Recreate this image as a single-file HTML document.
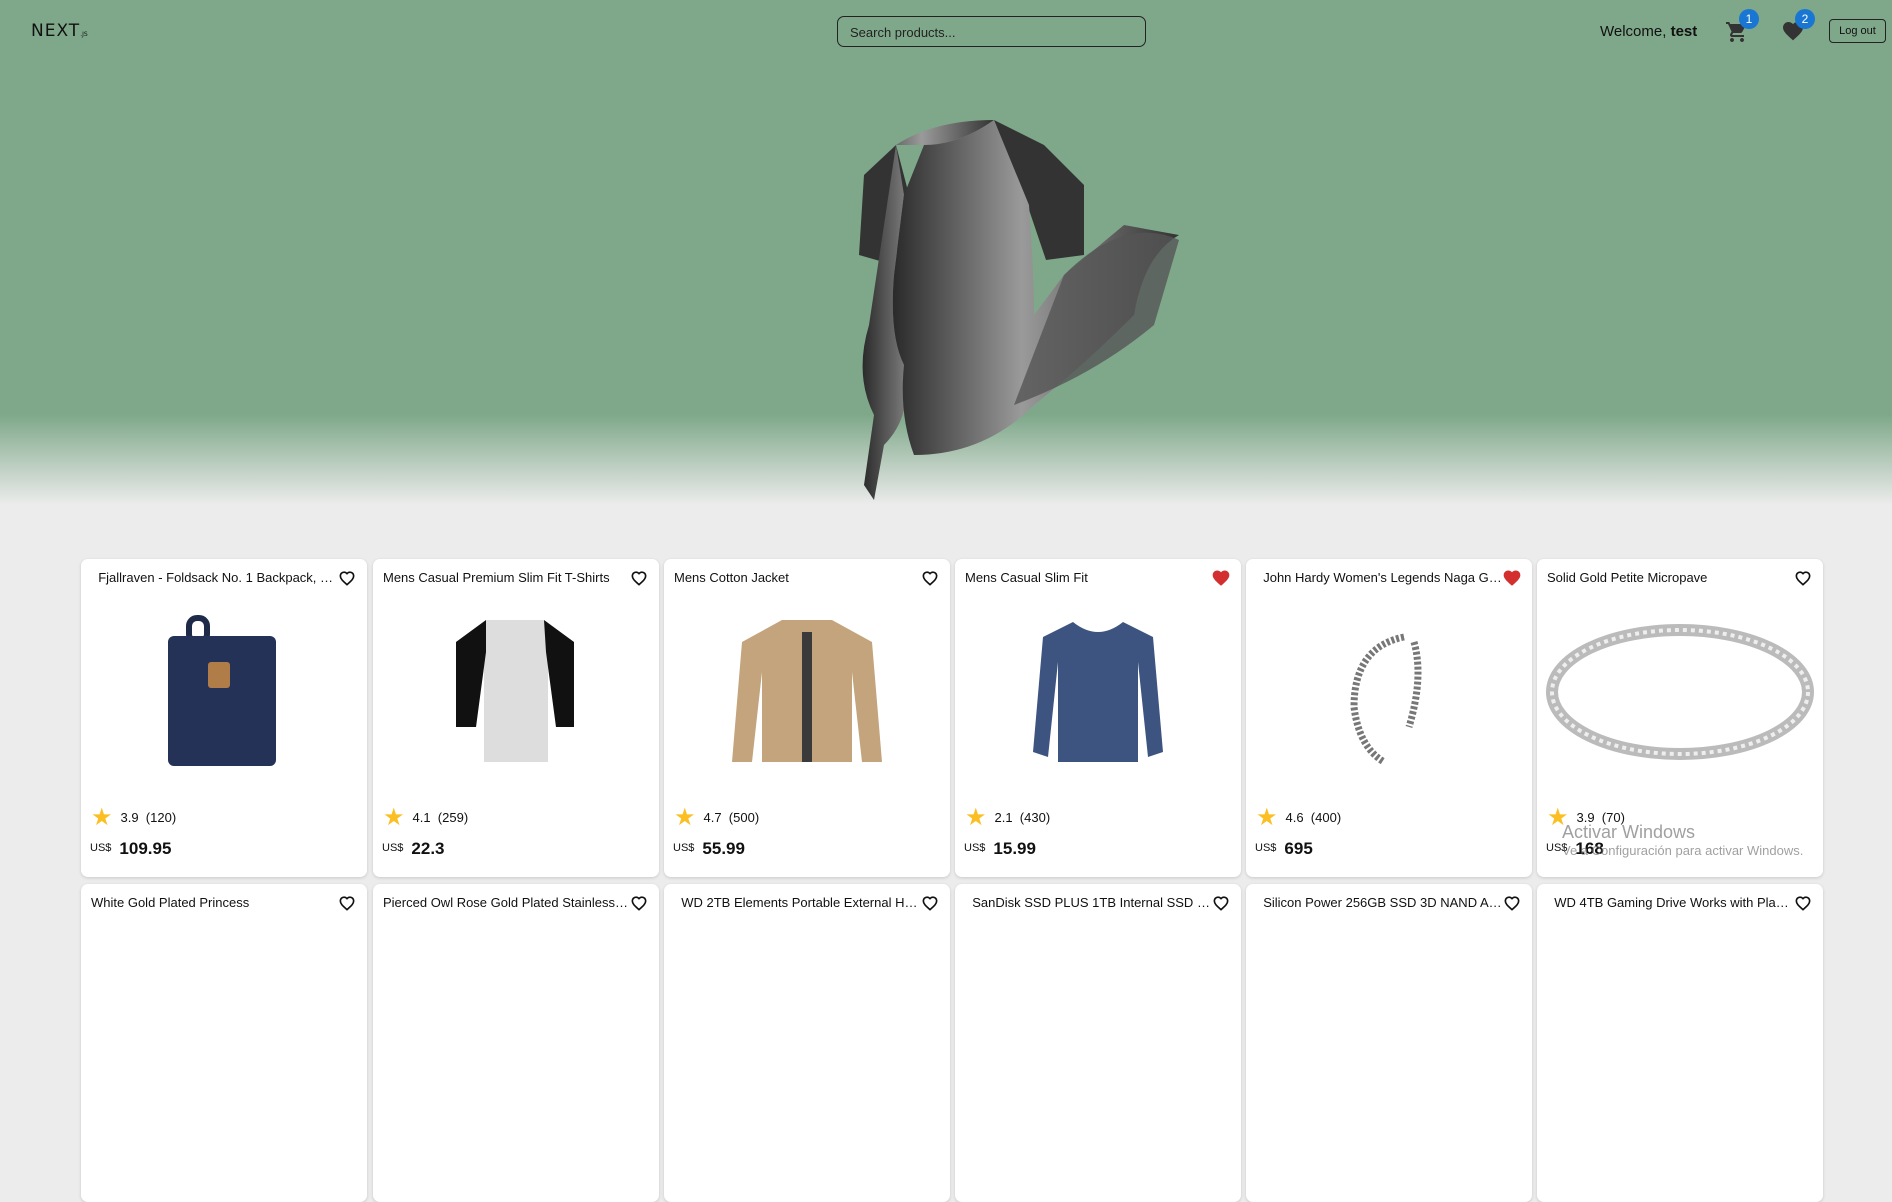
<!DOCTYPE html>
<html><head><meta charset="utf-8"><style>
*{box-sizing:border-box;margin:0;padding:0}
body{width:1892px;height:915px;overflow:hidden;background:#ececec;font-family:"Liberation Sans",sans-serif;color:#111;position:relative}
.hero{position:absolute;left:0;top:0;width:1892px;height:510px;background:linear-gradient(#7fa88a 0,#7fa88a 415px,#ececec 505px)}
.logo{position:absolute;left:31px;top:21px;font-size:17px;font-weight:normal;letter-spacing:1px;font-family:"DejaVu Sans",sans-serif}
.logo small{font-size:6px;letter-spacing:0}
.search{position:absolute;left:837px;top:16px;width:309px;height:31px;border:1.3px solid #222;border-radius:7px;font-size:13px;padding:8px 12px;color:#222}
.welcome{position:absolute;left:1600px;top:23px;font-size:15px}
.badge{position:absolute;width:20px;height:20px;border-radius:50%;background:#1976d2;color:#fff;font-size:12px;text-align:center;line-height:20px}
.logout{position:absolute;left:1829px;top:19px;width:57px;height:24px;border:1.3px solid #222;border-radius:4px;font-size:11px;text-align:center;line-height:22px}
.card{position:absolute;width:286px;height:318px;background:#fff;border-radius:7px;box-shadow:0 1px 3px rgba(0,0,0,.15)}
.t{position:absolute;left:10px;top:11px;width:248px;font-size:13px;white-space:nowrap;overflow:hidden;text-overflow:ellipsis}
.h{position:absolute;right:10px;top:9px}
.img{position:absolute;left:0;top:48px;width:286px;height:170px;display:flex;align-items:center;justify-content:center}
.r{position:absolute;left:10px;top:244px;font-size:13px;display:flex;align-items:center;gap:8px}
.p{position:absolute;left:9px;top:277px;font-size:11px}
.p b{font-size:17px;font-weight:600;margin-left:8px;position:relative;top:3px}
.wm{position:absolute;left:1562px;top:822px;color:rgba(120,120,120,.7);font-size:18px}
.wm div{font-size:13px}
</style></head><body>
<div class="hero"></div>
<div class="logo">NEXT<small>.JS</small></div>
<div class="search">Search products...</div>
<div class="welcome">Welcome, <b>test</b></div>
<svg style="position:absolute;left:1725px;top:20px" width="24" height="24" viewBox="0 0 24 24"><path fill="#333" d="M7 18c-1.1 0-2 .9-2 2s.9 2 2 2 2-.9 2-2-.9-2-2-2zM1 2v2h2l3.6 7.6-1.4 2.4c-.1.3-.2.6-.2 1 0 1.1.9 2 2 2h12v-2H7.4c-.1 0-.2-.1-.2-.2v-.1l.9-1.7h7.4c.8 0 1.4-.4 1.7-1l3.6-6.5c.1-.2.1-.3.1-.5 0-.6-.4-1-1-1H5.2l-.9-2H1zm16 16c-1.1 0-2 .9-2 2s.9 2 2 2 2-.9 2-2-.9-2-2-2z"/></svg>
<div class="badge" style="left:1739px;top:9px">1</div>
<svg style="position:absolute;left:1781px;top:19px" width="24" height="24" viewBox="0 0 24 24"><path fill="#333" d="M12 21.35l-1.45-1.32C5.4 15.36 2 12.28 2 8.5 2 5.42 4.42 3 7.5 3c1.74 0 3.41.81 4.5 2.09C13.09 3.81 14.76 3 16.5 3 19.58 3 22 5.42 22 8.5c0 3.78-3.4 6.86-8.55 11.54L12 21.35z"/></svg>
<div class="badge" style="left:1795px;top:9px">2</div>
<div class="logout">Log out</div>
<svg style="position:absolute;left:784px;top:115px" width="405" height="390" viewBox="0 0 405 390">
<defs><linearGradient id="g" x1="0" x2="1"><stop offset="0" stop-color="#2a2a2a"/><stop offset=".45" stop-color="#9a9a9a"/><stop offset="1" stop-color="#333"/></linearGradient></defs>
<path fill="#333" d="M112 30 L80 60 L75 140 L110 150 L125 80Z"/>
<path fill="#333" d="M210 5 L260 30 L300 70 L300 140 L262 145 L240 80Z"/>
<path fill="url(#g)" d="M112 30 Q150 5 210 5 Q175 30 140 30 L112 30 L120 80 L110 160 Q105 220 120 250 Q130 300 100 330 L90 385 L80 370 L90 300 Q70 260 85 210 L112 30Z"/>
<path fill="url(#g)" d="M140 30 Q175 30 210 5 L245 90 Q250 160 250 200 L280 160 L340 110 L395 120 Q360 140 350 200 Q300 250 250 290 Q200 340 130 340 Q115 300 120 250 Q105 220 110 160 L120 80Z"/>
<path fill="#555" opacity=".8" d="M280 160 Q340 100 395 125 L370 210 Q310 260 230 290Z"/>
</svg>

<div class="card" style="left:81px;top:559px"><div class="t">&nbsp; Fjallraven - Foldsack No. 1 Backpack, Fits 15 Laptops</div><svg class="h" width="20" height="20" viewBox="0 0 24 24"><path fill="none" stroke="#111" stroke-width="2" d="M12 20l-1.2-1.1C6.5 15 4 12.7 4 9.5 4 7 6 5 8.4 5c1.4 0 2.7.7 3.6 1.7C12.9 5.7 14.2 5 15.6 5 18 5 20 7 20 9.5c0 3.2-2.5 5.5-6.8 9.4z"/></svg>
<div class="img"><svg width="120" height="160"><rect x="25" y="6" width="18" height="24" rx="8" fill="none" stroke="#1e2b48" stroke-width="6"/><rect x="4" y="24" width="108" height="130" rx="6" fill="#233256"/><rect x="44" y="50" width="22" height="26" rx="3" fill="#b07d48"/></svg></div>
<div class="r"><span style="color:#fbbf24;font-size:24px">★</span>3.9 &nbsp;(120)</div><div class="p">US$<b>109.95</b></div></div>

<div class="card" style="left:373px;top:559px"><div class="t">Mens Casual Premium Slim Fit T-Shirts</div><svg class="h" width="20" height="20" viewBox="0 0 24 24"><path fill="none" stroke="#111" stroke-width="2" d="M12 20l-1.2-1.1C6.5 15 4 12.7 4 9.5 4 7 6 5 8.4 5c1.4 0 2.7.7 3.6 1.7C12.9 5.7 14.2 5 15.6 5 18 5 20 7 20 9.5c0 3.2-2.5 5.5-6.8 9.4z"/></svg>
<div class="img"><svg width="120" height="160"><path d="M30 8 L0 30 L0 115 L20 115 L28 50 L28 150 L92 150 L92 50 L100 115 L118 115 L118 30 L88 8Z" fill="#ddd"/><path d="M30 8 L0 30 L0 115 L20 115 L30 40Z M88 8 L118 30 L118 115 L100 115 L90 40Z" fill="#111"/></svg></div>
<div class="r"><span style="color:#fbbf24;font-size:24px">★</span>4.1 &nbsp;(259)</div><div class="p">US$<b>22.3</b></div></div>

<div class="card" style="left:664px;top:559px"><div class="t">Mens Cotton Jacket</div><svg class="h" width="20" height="20" viewBox="0 0 24 24"><path fill="none" stroke="#111" stroke-width="2" d="M12 20l-1.2-1.1C6.5 15 4 12.7 4 9.5 4 7 6 5 8.4 5c1.4 0 2.7.7 3.6 1.7C12.9 5.7 14.2 5 15.6 5 18 5 20 7 20 9.5c0 3.2-2.5 5.5-6.8 9.4z"/></svg>
<div class="img"><svg width="150" height="160"><path d="M50 8 L10 30 L0 150 L20 150 L30 60 L30 150 L120 150 L120 60 L130 150 L150 150 L140 30 L100 8Z" fill="#c4a47c"/><rect x="70" y="20" width="10" height="130" fill="#3a3a3a"/></svg></div>
<div class="r"><span style="color:#fbbf24;font-size:24px">★</span>4.7 &nbsp;(500)</div><div class="p">US$<b>55.99</b></div></div>

<div class="card" style="left:955px;top:559px"><div class="t">Mens Casual Slim Fit</div><svg class="h" width="20" height="20" viewBox="0 0 24 24"><path fill="#d32f2f" d="M12 21.35l-1.45-1.32C5.4 15.36 2 12.28 2 8.5 2 5.42 4.42 3 7.5 3c1.74 0 3.41.81 4.5 2.09C13.09 3.81 14.76 3 16.5 3 19.58 3 22 5.42 22 8.5c0 3.780-3.4 6.86-8.55 11.54L12 21.35z"/></svg>
<div class="img"><svg width="130" height="160"><path d="M40 10 L10 25 L0 140 L15 145 L25 50 L25 150 L105 150 L105 50 L115 145 L130 140 L120 25 L90 10 Q65 30 40 10Z" fill="#3e5480"/></svg></div>
<div class="r"><span style="color:#fbbf24;font-size:24px">★</span>2.1 &nbsp;(430)</div><div class="p">US$<b>15.99</b></div></div>

<div class="card" style="left:1246px;top:559px"><div class="t">&nbsp; John Hardy Women's Legends Naga Gold &amp; Silver Dragon</div><svg class="h" width="20" height="20" viewBox="0 0 24 24"><path fill="#d32f2f" d="M12 21.35l-1.45-1.32C5.4 15.36 2 12.28 2 8.5 2 5.42 4.42 3 7.5 3c1.74 0 3.41.81 4.5 2.09C13.09 3.81 14.76 3 16.5 3 19.58 3 22 5.42 22 8.5c0 3.78-3.4 6.86-8.55 11.54L12 21.35z"/></svg>
<div class="img"><svg width="110" height="150"><path d="M70 20 Q20 30 20 90 Q25 130 50 145" fill="none" stroke="#777" stroke-width="7" stroke-dasharray="3 2"/><path d="M80 25 Q90 60 75 110" fill="none" stroke="#777" stroke-width="7" stroke-dasharray="3 2"/></svg></div>
<div class="r"><span style="color:#fbbf24;font-size:24px">★</span>4.6 &nbsp;(400)</div><div class="p">US$<b>695</b></div></div>

<div class="card" style="left:1537px;top:559px"><div class="t">Solid Gold Petite Micropave</div><svg class="h" width="20" height="20" viewBox="0 0 24 24"><path fill="none" stroke="#111" stroke-width="2" d="M12 20l-1.2-1.1C6.5 15 4 12.7 4 9.5 4 7 6 5 8.4 5c1.4 0 2.7.7 3.6 1.7C12.9 5.7 14.2 5 15.6 5 18 5 20 7 20 9.5c0 3.2-2.5 5.5-6.8 9.4z"/></svg>
<div class="img"><svg width="270" height="150"><ellipse cx="135" cy="75" rx="128" ry="62" fill="none" stroke="#bbb" stroke-width="12"/><ellipse cx="135" cy="75" rx="128" ry="62" fill="none" stroke="#eee" stroke-width="4" stroke-dasharray="4 4"/></svg></div>
<div class="r"><span style="color:#fbbf24;font-size:24px">★</span>3.9 &nbsp;(70)</div><div class="p">US$<b>168</b></div></div>

<div class="card" style="left:81px;top:884px"><div class="t">White Gold Plated Princess</div><svg class="h" width="20" height="20" viewBox="0 0 24 24"><path fill="none" stroke="#111" stroke-width="2" d="M12 20l-1.2-1.1C6.5 15 4 12.7 4 9.5 4 7 6 5 8.4 5c1.4 0 2.7.7 3.6 1.7C12.9 5.7 14.2 5 15.6 5 18 5 20 7 20 9.5c0 3.2-2.5 5.5-6.8 9.4z"/></svg></div>
<div class="card" style="left:373px;top:884px"><div class="t">Pierced Owl Rose Gold Plated Stainless Steel Double</div><svg class="h" width="20" height="20" viewBox="0 0 24 24"><path fill="none" stroke="#111" stroke-width="2" d="M12 20l-1.2-1.1C6.5 15 4 12.7 4 9.5 4 7 6 5 8.4 5c1.4 0 2.7.7 3.6 1.7C12.9 5.7 14.2 5 15.6 5 18 5 20 7 20 9.5c0 3.2-2.5 5.5-6.8 9.4z"/></svg></div>
<div class="card" style="left:664px;top:884px"><div class="t">&nbsp; WD 2TB Elements Portable External Hard Drive</div><svg class="h" width="20" height="20" viewBox="0 0 24 24"><path fill="none" stroke="#111" stroke-width="2" d="M12 20l-1.2-1.1C6.5 15 4 12.7 4 9.5 4 7 6 5 8.4 5c1.4 0 2.7.7 3.6 1.7C12.9 5.7 14.2 5 15.6 5 18 5 20 7 20 9.5c0 3.2-2.5 5.5-6.8 9.4z"/></svg></div>
<div class="card" style="left:955px;top:884px"><div class="t">&nbsp; SanDisk SSD PLUS 1TB Internal SSD - SATA III</div><svg class="h" width="20" height="20" viewBox="0 0 24 24"><path fill="none" stroke="#111" stroke-width="2" d="M12 20l-1.2-1.1C6.5 15 4 12.7 4 9.5 4 7 6 5 8.4 5c1.4 0 2.7.7 3.6 1.7C12.9 5.7 14.2 5 15.6 5 18 5 20 7 20 9.5c0 3.2-2.5 5.5-6.8 9.4z"/></svg></div>
<div class="card" style="left:1246px;top:884px"><div class="t">&nbsp; Silicon Power 256GB SSD 3D NAND A55 SLC</div><svg class="h" width="20" height="20" viewBox="0 0 24 24"><path fill="none" stroke="#111" stroke-width="2" d="M12 20l-1.2-1.1C6.5 15 4 12.7 4 9.5 4 7 6 5 8.4 5c1.4 0 2.7.7 3.6 1.7C12.9 5.7 14.2 5 15.6 5 18 5 20 7 20 9.5c0 3.2-2.5 5.5-6.8 9.4z"/></svg></div>
<div class="card" style="left:1537px;top:884px"><div class="t">&nbsp; WD 4TB Gaming Drive Works with Playstation 4</div><svg class="h" width="20" height="20" viewBox="0 0 24 24"><path fill="none" stroke="#111" stroke-width="2" d="M12 20l-1.2-1.1C6.5 15 4 12.7 4 9.5 4 7 6 5 8.4 5c1.4 0 2.7.7 3.6 1.7C12.9 5.7 14.2 5 15.6 5 18 5 20 7 20 9.5c0 3.2-2.5 5.5-6.8 9.4z"/></svg></div>

<div class="wm">Activar Windows<div>Ve a Configuración para activar Windows.</div></div>
</body></html>
